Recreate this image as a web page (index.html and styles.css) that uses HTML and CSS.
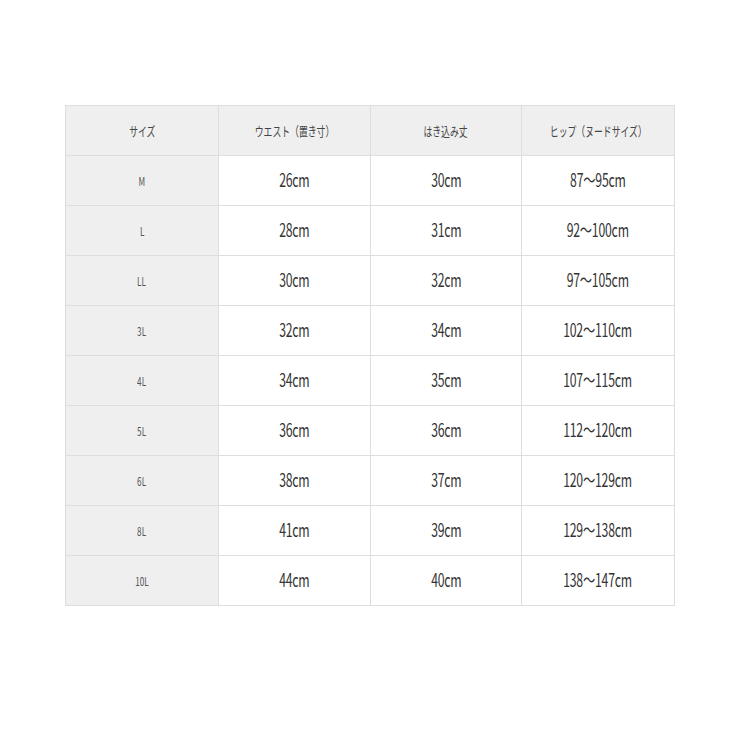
FILE: index.html
```html
<!DOCTYPE html>
<html lang="ja">
<head>
<meta charset="utf-8">
<link rel="stylesheet" href="styles.css">
</head>
<body>
<table class="size-table">
  <colgroup>
    <col class="c1"><col class="c2"><col class="c3"><col class="c4">
  </colgroup>
  <thead>
    <tr>
      <th><span class="hd">サイズ</span></th>
      <th><span class="hd">ウエスト（置き寸）</span></th>
      <th><span class="hd">はき込み丈</span></th>
      <th><span class="hd">ヒップ（ヌードサイズ）</span></th>
    </tr>
  </thead>
  <tbody>
    <tr><th><span class="sz">M</span></th><td><span class="v">26cm</span></td><td><span class="v">30cm</span></td><td><span class="v">87～95cm</span></td></tr>
    <tr><th><span class="sz">L</span></th><td><span class="v">28cm</span></td><td><span class="v">31cm</span></td><td><span class="v">92～100cm</span></td></tr>
    <tr><th><span class="sz">LL</span></th><td><span class="v">30cm</span></td><td><span class="v">32cm</span></td><td><span class="v">97～105cm</span></td></tr>
    <tr><th><span class="sz">3L</span></th><td><span class="v">32cm</span></td><td><span class="v">34cm</span></td><td><span class="v">102～110cm</span></td></tr>
    <tr><th><span class="sz">4L</span></th><td><span class="v">34cm</span></td><td><span class="v">35cm</span></td><td><span class="v">107～115cm</span></td></tr>
    <tr><th><span class="sz">5L</span></th><td><span class="v">36cm</span></td><td><span class="v">36cm</span></td><td><span class="v">112～120cm</span></td></tr>
    <tr><th><span class="sz">6L</span></th><td><span class="v">38cm</span></td><td><span class="v">37cm</span></td><td><span class="v">120～129cm</span></td></tr>
    <tr><th><span class="sz">8L</span></th><td><span class="v">41cm</span></td><td><span class="v">39cm</span></td><td><span class="v">129～138cm</span></td></tr>
    <tr><th><span class="sz">10L</span></th><td><span class="v">44cm</span></td><td><span class="v">40cm</span></td><td><span class="v">138～147cm</span></td></tr>
  </tbody>
</table>
</body>
</html>
```
FILE: styles.css
```css
html, body {
  margin: 0;
  padding: 0;
  background: #fff;
}
body {
  padding: 105px 0 0 65px;
  font-family: "Noto Sans CJK JP", "Noto Sans", sans-serif;
  color: #333;
}
.size-table {
  border-collapse: collapse;
  table-layout: fixed;
  width: 609px;
  border: 1px solid #dedede;
}
.c1 { width: 153px; }
.c2 { width: 152px; }
.c3 { width: 151px; }
.c4 { width: 153px; }
.size-table th,
.size-table td {
  height: 46px;
  padding: 0 0 3px 0;
  border: 1px solid #dedede;
  text-align: center;
  vertical-align: middle;
  font-weight: normal;
  line-height: 1;
}
.size-table thead th {
  background: #efefef;
}
.size-table tbody th {
  background: #efefef;
}
.size-table td {
  background: #fff;
}
.hd, .sz, .v {
  display: inline-block;
  transform: scaleX(0.68);
  white-space: nowrap;
}
.hd {
  font-size: 13px;
  color: #444;
}
.sz {
  font-size: 12px;
  color: #555;
}
.v {
  font-size: 18px;
  color: #333;
  letter-spacing: -0.3px;
}
```
